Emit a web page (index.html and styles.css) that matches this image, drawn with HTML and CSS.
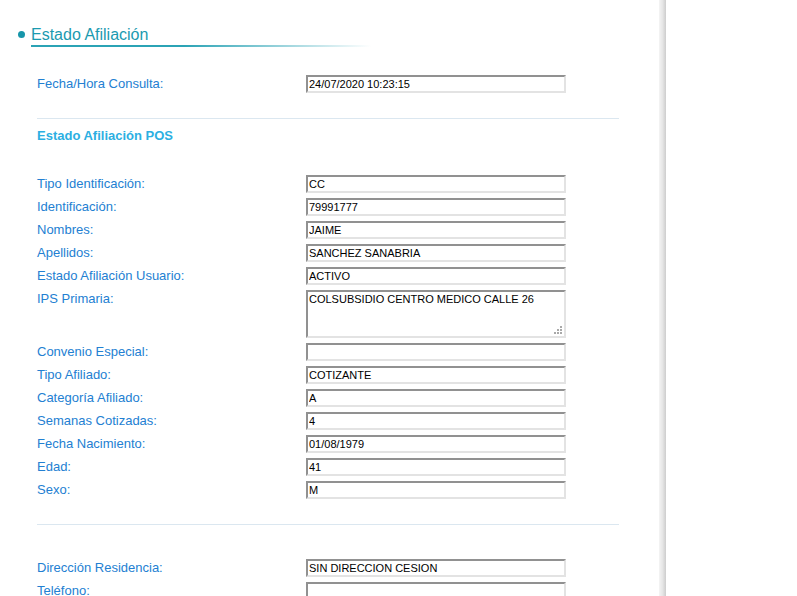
FILE: index.html
```html
<!DOCTYPE html>
<html lang="es">
<head>
<meta charset="utf-8">
<title>Estado Afiliación</title>
<link rel="stylesheet" href="styles.css">
</head>
<body>
<div class="frame">
  <main class="page">
    <h2 class="title"><span class="dot"></span><span class="title-text">Estado Afiliación</span></h2>
    <section class="form">
      <div class="row row-first"><label class="lbl">Fecha/Hora Consulta:</label><input class="fld" type="text" value="24/07/2020 10:23:15" readonly></div>
      <hr class="sep sep-top">
      <h3 class="subtitle">Estado Afiliación POS</h3>
      <div class="row"><label class="lbl">Tipo Identificación:</label><input class="fld" type="text" value="CC" readonly></div>
      <div class="row"><label class="lbl">Identificación:</label><input class="fld" type="text" value="79991777" readonly></div>
      <div class="row"><label class="lbl">Nombres:</label><input class="fld" type="text" value="JAIME" readonly></div>
      <div class="row"><label class="lbl">Apellidos:</label><input class="fld" type="text" value="SANCHEZ SANABRIA" readonly></div>
      <div class="row"><label class="lbl">Estado Afiliación Usuario:</label><input class="fld" type="text" value="ACTIVO" readonly></div>
      <div class="row"><label class="lbl">IPS Primaria:</label>
        <div class="area-wrap">
          <textarea class="area" readonly>COLSUBSIDIO CENTRO MEDICO CALLE 26</textarea>
          <svg class="grip" width="8" height="8" viewBox="0 0 8 8" aria-hidden="true">
            <rect x="6" y="0" width="2" height="2" fill="#a9a9a9"/>
            <rect x="3" y="3" width="2" height="2" fill="#a9a9a9"/>
            <rect x="6" y="3" width="2" height="2" fill="#a9a9a9"/>
            <rect x="0" y="6" width="2" height="2" fill="#a9a9a9"/>
            <rect x="3" y="6" width="2" height="2" fill="#a9a9a9"/>
            <rect x="6" y="6" width="2" height="2" fill="#a9a9a9"/>
          </svg>
        </div>
      </div>
      <div class="row"><label class="lbl">Convenio Especial:</label><input class="fld" type="text" value="" readonly></div>
      <div class="row"><label class="lbl">Tipo Afiliado:</label><input class="fld" type="text" value="COTIZANTE" readonly></div>
      <div class="row"><label class="lbl">Categoría Afiliado:</label><input class="fld" type="text" value="A" readonly></div>
      <div class="row"><label class="lbl">Semanas Cotizadas:</label><input class="fld" type="text" value="4" readonly></div>
      <div class="row"><label class="lbl">Fecha Nacimiento:</label><input class="fld" type="text" value="01/08/1979" readonly></div>
      <div class="row"><label class="lbl">Edad:</label><input class="fld" type="text" value="41" readonly></div>
      <div class="row"><label class="lbl">Sexo:</label><input class="fld" type="text" value="M" readonly></div>
      <hr class="sep sep-bottom">
      <div class="row"><label class="lbl">Dirección Residencia:</label><input class="fld" type="text" value="SIN DIRECCION CESION" readonly></div>
      <div class="row"><label class="lbl">Teléfono:</label><input class="fld" type="text" value="" readonly></div>
    </section>
  </main>
  <div class="edge"></div>
</div>
</body>
</html>
```
FILE: styles.css
```css
html, body {
  margin: 0;
  padding: 0;
  height: 100%;
  overflow: hidden;
  background: #ffffff;
}

body {
  font-family: "Liberation Sans", Arial, sans-serif;
}

.frame {
  display: flex;
  align-items: stretch;
  min-height: 100%;
}

.page {
  width: 659px;
  flex: 0 0 659px;
  background: #ffffff;
}

.edge {
  width: 7px;
  flex: 0 0 7px;
  background: linear-gradient(to right, #f4f4f4 0%, #e6e6e6 50%, #cdcdcd 100%);
}

.title {
  display: flex;
  align-items: flex-start;
  margin: 0;
  padding: 25px 0 0 18px;
  font-weight: normal;
  font-size: 16px;
  line-height: 20px;
  color: #1b9ab0;
}

.dot {
  width: 7px;
  height: 7px;
  border-radius: 50%;
  background: #1796aa;
  margin: 6px 6px 0 0;
  flex: 0 0 7px;
}

.title-text {
  display: block;
  width: 340px;
  padding-bottom: 2px;
  background: linear-gradient(to right, #2ba3b5 0%, #2ba3b5 45%, rgba(43, 163, 181, 0) 100%) left bottom / 100% 2px no-repeat;
}

.form {
  padding: 28px 0 0 37px;
}

.row {
  display: flex;
  align-items: flex-start;
  margin-bottom: 5px;
}

.lbl {
  width: 269px;
  flex: 0 0 269px;
  font-size: 13px;
  line-height: 18px;
  color: #2380d2;
}

.fld {
  box-sizing: border-box;
  width: 260px;
  height: 18px;
  margin: 0;
  padding: 0 1px;
  border-style: solid;
  border-width: 2px;
  border-color: #919191 #e3e3e3 #e3e3e3 #919191;
  background: #ffffff;
  font-family: "Liberation Sans", Arial, sans-serif;
  font-size: 11px;
  color: #000000;
  outline: none;
}

.area-wrap {
  position: relative;
  width: 260px;
  height: 48px;
}

.area {
  display: block;
  box-sizing: border-box;
  width: 260px;
  height: 48px;
  margin: 0;
  padding: 1px;
  border-style: solid;
  border-width: 2px;
  border-color: #919191 #e3e3e3 #e3e3e3 #919191;
  background: #ffffff;
  font-family: "Liberation Sans", Arial, sans-serif;
  font-size: 11px;
  line-height: 13px;
  color: #000000;
  resize: none;
  overflow: hidden;
  outline: none;
}

.grip {
  position: absolute;
  right: 4px;
  bottom: 4px;
  display: block;
}

.sep {
  width: 582px;
  height: 1px;
  border: 0;
  background: #dbe7f0;
  margin: 0;
}

.sep-top {
  margin-top: 25px;
}

.sep-bottom {
  margin-top: 25px;
  margin-bottom: 34px;
}

.subtitle {
  margin: 9px 0 31px 0;
  font-size: 13px;
  line-height: 16px;
  font-weight: bold;
  color: #2cafe2;
}
```
